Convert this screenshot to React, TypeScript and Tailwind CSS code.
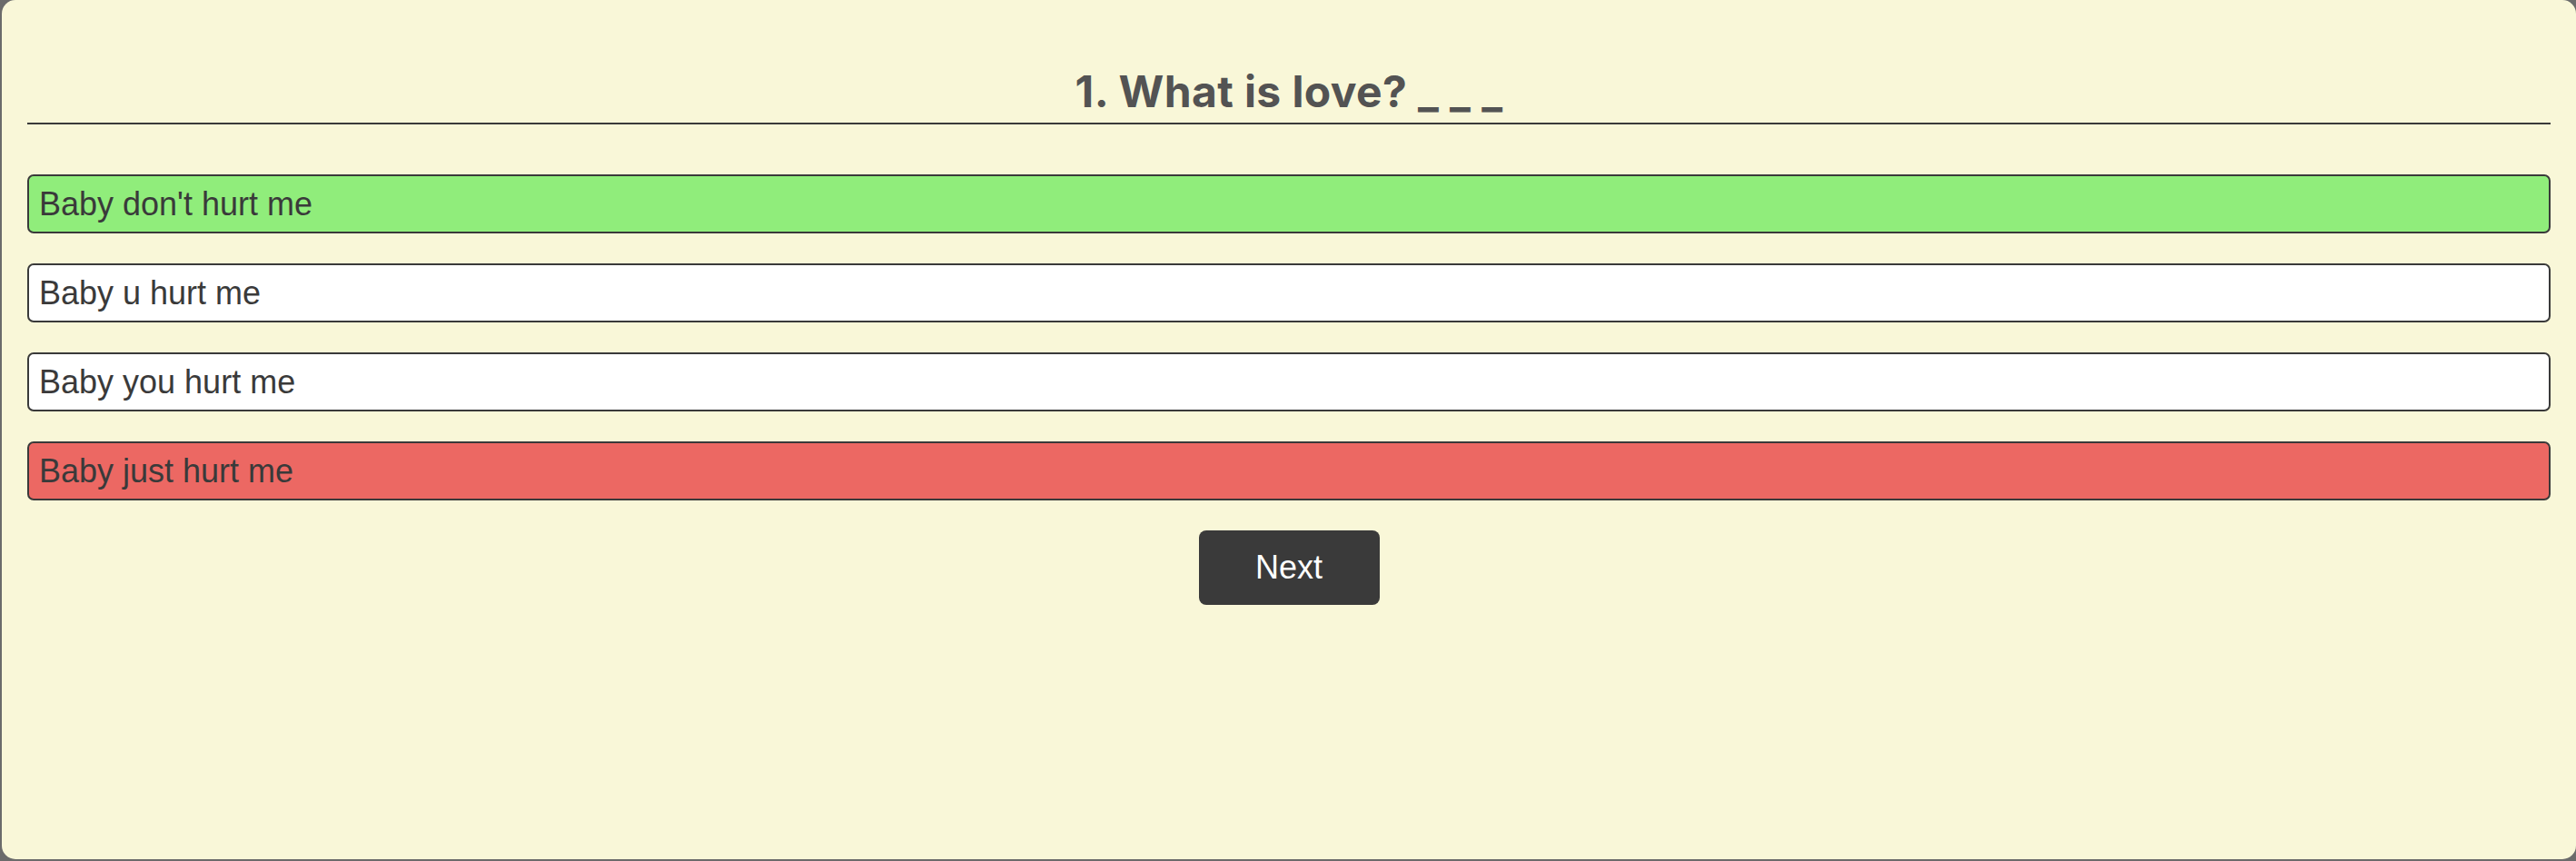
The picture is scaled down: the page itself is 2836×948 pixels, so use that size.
import React from "react";

const options = [
  { text: "Baby don't hurt me", bg: "bg-[#90ed7b]" },
  { text: "Baby u hurt me", bg: "bg-white" },
  { text: "Baby you hurt me", bg: "bg-white" },
  { text: "Baby just hurt me", bg: "bg-[#ec6863]" },
];

export default function App() {
  return (
    <div className="h-[948px] w-full bg-[#6b6b6b] pl-[2px] pb-[2px]">
      <div className="h-[946px] rounded-[15px] bg-[#f9f7d8] px-[28px] pt-[77px]">
        <div className="border-b-2 border-[#3a3a3a] pb-[10px] text-center">
          <h1
            className="text-[48px] leading-[48px] font-bold text-[#535353] tracking-[0.4px]"
            style={{ fontFamily: "Inter, 'Noto Sans', sans-serif" }}
          >
            1. What is love? _ _ _
          </h1>
        </div>
        <div
          className="mt-[55px] flex flex-col gap-[33px]"
          style={{ fontFamily: "'Liberation Sans', Arial, sans-serif" }}
        >
          {options.map((o) => (
            <div
              key={o.text}
              className={`flex h-[65px] items-center rounded-[7px] border-2 border-[#3a3a3a] px-[11px] text-[36px] text-[#3a3a3a] ${o.bg}`}
            >
              {o.text}
            </div>
          ))}
          <div className="flex justify-center">
            <button
              className="flex h-[82px] w-[199px] items-center justify-center rounded-[8px] bg-[#3a3a3a] text-[36px] text-white"
              style={{ fontFamily: "'Liberation Sans', Arial, sans-serif" }}
            >
              Next
            </button>
          </div>
        </div>
      </div>
    </div>
  );
}
